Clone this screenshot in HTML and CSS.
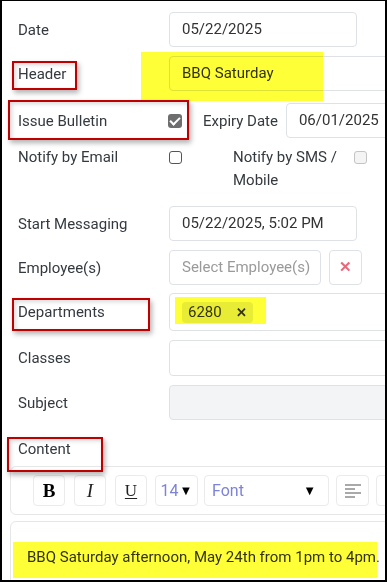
FILE: index.html
```html
<!DOCTYPE html>
<html lang="en">
<head>
  <meta charset="UTF-8">
  <meta name="viewport" content="width=device-width, initial-scale=1.0">
  <title>Bulletin</title>
  <link rel="stylesheet" href="styles.css">
</head>
<body>
  <div id="frame">
    <div id="form">
      <div class="row">
        <div class="label">Date</div>
        <div class="field short">05/22/2025</div>
      </div>
      <div class="row">
        <div class="label">Header</div>
        <div class="field long">BBQ Saturday</div>
      </div>
      <div class="row row-issue">
        <div class="label">Issue Bulletin</div>
        <span class="check checked"></span>
        <div class="inline-label">Expiry Date</div>
        <div class="field expiry">06/01/2025</div>
      </div>
      <div class="row row-notify">
        <div class="label">Notify by Email</div>
        <span class="check"></span>
        <div class="sms-label">Notify by SMS /<br>Mobile</div>
        <span class="check disabled"></span>
      </div>
      <div class="row">
        <div class="label">Start Messaging</div>
        <div class="field short">05/22/2025, 5:02 PM</div>
      </div>
      <div class="row">
        <div class="label">Employee(s)</div>
        <div class="field select placeholder">Select Employee(s)</div>
        <div class="clear-btn">&#x2715;</div>
      </div>
      <div class="row row-dept">
        <div class="label">Departments</div>
        <div class="field long tags">
          <span class="tag">6280 <b>&#x2715;</b></span>
        </div>
      </div>
      <div class="row row-classes">
        <div class="label">Classes</div>
        <div class="field long"></div>
      </div>
      <div class="row row-subject">
        <div class="label">Subject</div>
        <div class="field long disabled-field"></div>
      </div>
      <div class="content-label">Content</div>
      <div class="toolbar">
        <div class="tool bold">B</div>
        <div class="tool italic">I</div>
        <div class="tool under">U</div>
        <div class="tool size">14<span class="caret">&#9660;</span></div>
        <div class="tool font">Font<span class="caret">&#9660;</span></div>
        <div class="tool align">
          <svg width="18" height="14" viewBox="0 0 18 14">
            <path d="M1 1h16M1 5h10M1 9h16M1 13h10" stroke="#555" stroke-width="1.2"/>
          </svg>
        </div>
        <div class="tool align"></div>
      </div>
      <div class="editor">
        <p class="editor-text">BBQ Saturday afternoon, May 24th from 1pm to 4pm.</p>
      </div>
    </div>
  </div>

  <!-- annotations drawn over the screenshot -->
  <div class="mark hl-header"></div>
  <div class="mark hl-dept"></div>
  <div class="mark hl-content"></div>
  <div class="box box-header"></div>
  <div class="box box-issue"></div>
  <div class="box box-dept"></div>
  <div class="box box-content"></div>
</body>
</html>
```

FILE: styles.css
```css
body {
  margin: 0;
  padding: 0;
  position: relative;
  background-color: #ffffff;
  font-family: Roboto, 'Liberation Sans', sans-serif;
  font-size: 15px;
  color: #343a40;
}
#frame {
  width: 387px;
  height: 582px;
  box-sizing: border-box;
  border-style: solid;
  border-color: #000000;
  border-width: 1px 2px 2px 2px;
  overflow: hidden;
}
#form {
  padding: 11px 0 0 16px;
  width: 460px;
}
.row {
  display: flex;
  align-items: center;
  height: 35px;
  margin-bottom: 9px;
}
.label {
  width: 151px;
  flex-shrink: 0;
}
.field {
  box-sizing: border-box;
  height: 35px;
  line-height: 33px;
  padding: 0 12px;
  border: 1px solid #dee2e6;
  border-radius: 4px;
  background-color: #ffffff;
  white-space: nowrap;
  color: #333333;
}
.short {
  width: 188px;
}
.long {
  width: 260px;
}
.row-issue {
  margin-top: 12px;
}
.check {
  box-sizing: border-box;
  width: 13px;
  height: 13px;
  border: 1px solid #555555;
  border-radius: 3px;
  background-color: #ffffff;
  flex-shrink: 0;
}
.check.checked {
  position: relative;
  width: 14px;
  height: 14px;
  margin-left: -1px;
  border: none;
  background-color: #6e6e6e;
}
.check.checked::after {
  content: "";
  position: absolute;
  left: 4px;
  top: 1px;
  width: 4px;
  height: 8px;
  border: solid #ffffff;
  border-width: 0 2px 2px 0;
  transform: rotate(45deg);
}
.check.disabled {
  border-color: #c4c4c4;
  background-color: #f4f4f4;
}
.inline-label {
  margin-left: 21px;
  margin-right: 8px;
}
.expiry {
  width: 150px;
}
.row-notify {
  align-items: flex-start;
  height: 44px;
  margin-top: -1px;
  margin-bottom: 16px;
  line-height: 23px;
}
.row-notify .check {
  margin-top: 5px;
}
.sms-label {
  width: 121px;
  margin-left: 51px;
}
.select {
  width: 152px;
}
.placeholder {
  color: #9a9a9a;
}
.clear-btn {
  box-sizing: border-box;
  width: 33px;
  height: 35px;
  margin-left: 8px;
  border: 1px solid #dee2e6;
  border-radius: 4px;
  text-align: center;
  line-height: 33px;
  color: #e8677a;
  font-size: 15px;
  font-weight: bold;
}
.row-dept {
  height: 38px;
  margin-top: -1px;
}
.tags {
  height: 38px;
  padding: 0 0 0 12px;
  display: flex;
  align-items: center;
}
.tag {
  display: inline-flex;
  align-items: center;
  height: 21px;
  padding: 0 6px;
  border-radius: 4px;
  background-color: #e9ecef;
  line-height: 21px;
  color: #333333;
}
.tag b {
  margin-left: 14px;
  font-size: 13px;
}
.row-classes {
  height: 36px;
}
.row-classes .field {
  height: 36px;
}
.row-subject {
  margin-top: 2px;
}
.disabled-field {
  background-color: #f3f4f6;
}
.content-label {
  margin-top: 18px;
  line-height: 22px;
}
.toolbar {
  display: flex;
  align-items: center;
  gap: 8px;
  width: 460px;
  height: 49px;
  box-sizing: border-box;
  margin: 6px 0 0 -8px;
  padding-left: 22px;
  border: 1px solid #e6e6e6;
  border-radius: 6px;
}
.tool {
  box-sizing: border-box;
  height: 31px;
  width: 32px;
  border: 1px solid #ebebeb;
  border-radius: 4px;
  display: flex;
  align-items: center;
  justify-content: center;
  flex-shrink: 0;
  font-family: 'Liberation Serif', serif;
  font-size: 19px;
  color: #222222;
}
.bold {
  font-weight: bold;
  color: #000000;
}
.italic {
  font-style: italic;
  margin-left: 1px;
}
.under {
  text-decoration: underline;
  text-underline-offset: 2px;
  text-decoration-thickness: 1px;
  font-size: 17px;
  margin-left: 1px;
}
.size,
.font {
  font-family: Roboto, 'Liberation Sans', sans-serif;
  font-size: 16px;
  color: #7d83d9;
}
.size {
  width: 43px;
}
.font {
  width: 125px;
  justify-content: space-between;
  padding: 0 12px 0 7px;
  margin-left: -2px;
}
.caret {
  color: #000000;
  font-size: 13px;
  margin-left: 1px;
}
.align {
  width: 33px;
  margin-left: -1px;
}
.editor {
  margin: 6px 0 0 -8px;
  width: 460px;
  height: 80px;
  border: 1px solid #e6e6e6;
  border-radius: 6px;
  padding-top: 17px;
}
.editor-text {
  margin: 0;
  padding-left: 16px;
  line-height: 36px;
  white-space: nowrap;
  color: #333333;
}
.mark {
  position: absolute;
  background-color: #ffff38;
  mix-blend-mode: multiply;
}
.hl-header {
  left: 141px;
  top: 52px;
  width: 182px;
  height: 49px;
}
.hl-dept {
  left: 175px;
  top: 297px;
  width: 91px;
  height: 27px;
}
.hl-content {
  left: 13px;
  top: 542px;
  width: 364px;
  height: 36px;
}
.box {
  position: absolute;
  box-sizing: border-box;
  border: 2px solid #bf0000;
  box-shadow: 2px 3px 5px rgba(0, 0, 0, 0.3), inset 2px 2px 4px rgba(0, 0, 0, 0.15);
}
.box-header {
  left: 12px;
  top: 61px;
  width: 65px;
  height: 29px;
}
.box-issue {
  left: 8px;
  top: 100px;
  width: 181px;
  height: 40px;
}
.box-dept {
  left: 12px;
  top: 298px;
  width: 138px;
  height: 33px;
}
.box-content {
  left: 7px;
  top: 437px;
  width: 96px;
  height: 35px;
}
```
